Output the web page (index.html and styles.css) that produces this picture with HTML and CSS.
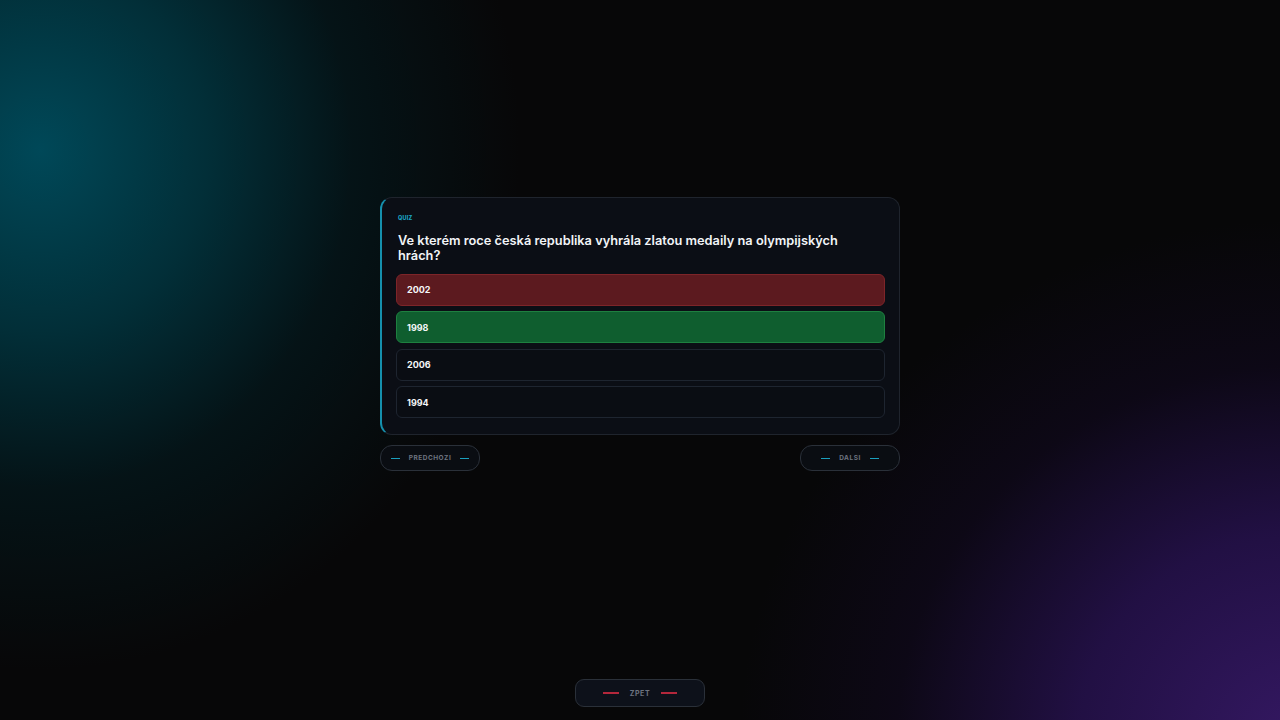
FILE: index.html
```html
<!DOCTYPE html>
<html lang="cs">
<head>
<meta charset="utf-8">
<title>Quiz</title>
<link rel="stylesheet" href="styles.css">
</head>
<body>
<div class="page">
  <main class="main">
    <div class="wrap">
      <section class="card">
        <div class="label">QUIZ</div>
        <h1 class="question">Ve kterém roce česká republika vyhrála zlatou medaily na olympijských hrách?</h1>
        <div class="options">
          <div class="option wrong">2002</div>
          <div class="option right">1998</div>
          <div class="option">2006</div>
          <div class="option">1994</div>
        </div>
      </section>
      <nav class="nav">
        <button class="navbtn"><span class="dash"></span><span>PREDCHOZI</span><span class="dash"></span></button>
        <button class="navbtn"><span class="dash"></span><span>DALSI</span><span class="dash"></span></button>
      </nav>
    </div>
  </main>
  <footer class="footer">
    <button class="back"><span class="rdash"></span><span>ZPET</span><span class="rdash"></span></button>
  </footer>
</div>
</body>
</html>
```

FILE: styles.css
```css
* { box-sizing: border-box; }
html, body { margin: 0; padding: 0; }
body {
  width: 1280px;
  height: 720px;
  overflow: hidden;
  font-family: "Inter", "DejaVu Sans", sans-serif;
  color: #f1f3f6;
  background:
    radial-gradient(ellipse 480px 520px at 40px 150px, rgba(0,72,88,1) 0%, rgba(0,60,72,0.75) 35%, rgba(0,42,50,0.35) 65%, rgba(0,0,0,0) 100%),
    radial-gradient(ellipse 560px 520px at 1300px 740px, rgba(52,24,98,1) 0%, rgba(40,18,82,0.8) 40%, rgba(24,10,48,0.35) 72%, rgba(0,0,0,0) 100%),
    #070708;
}
.page {
  height: 720px;
  display: flex;
  flex-direction: column;
}
.main {
  flex: 1;
  display: flex;
  align-items: center;
  justify-content: center;
}
.wrap {
  width: 520px;
  display: flex;
  flex-direction: column;
  gap: 10px;
}
.card {
  background: #0b0e15;
  border: 1px solid #1f242d;
  border-left: 2px solid #1590ad;
  border-radius: 12px;
  padding: 16px 14px 16px 14px;
}
.label {
  margin-left: 2px;
  font-size: 5.5px;
  font-weight: 800;
  color: #1aa3c2;
  letter-spacing: 0.04em;
  line-height: 8px;
}
.question {
  margin: 11px 0 11px 2px;
  max-width: 452px;
  font-size: 12.8px;
  line-height: 15px;
  font-weight: 600;
  color: #f2f4f7;
}
.options {
  display: flex;
  flex-direction: column;
  gap: 5.5px;
}
.option {
  height: 32px;
  display: flex;
  align-items: center;
  padding: 0 10px;
  border-radius: 6px;
  border: 1px solid #1e2530;
  background: #0a0d13;
  font-size: 9px;
  font-weight: 700;
  color: #f4f6f8;
}
.option.wrong { background: #5c1a1f; border-color: #7d2529; }
.option.right { background: #0f5e2f; border-color: #1e8040; }
.nav {
  display: flex;
  justify-content: space-between;
}
.navbtn, .back {
  display: flex;
  align-items: center;
  justify-content: center;
  border: 1px solid #2a3039;
  background: #0a0d12;
  color: #6d7480;
  font-family: "Inter", "DejaVu Sans", sans-serif;
  font-weight: 700;
  letter-spacing: 0.08em;
  padding: 0;
  cursor: pointer;
}
.navbtn {
  width: 100px;
  height: 26px;
  border-radius: 12px;
  font-size: 6.5px;
  gap: 9px;
}
.dash {
  width: 9px;
  height: 1.5px;
  background: #1a9fbe;
}
.footer {
  height: 52px;
  display: flex;
  justify-content: center;
  padding-top: 11px;
}
.back {
  width: 130px;
  height: 28px;
  border-radius: 9px;
  background: #0d111a;
  font-size: 7px;
  gap: 11px;
}
.rdash {
  width: 16px;
  height: 1.5px;
  background: #b3273b;
}
```
